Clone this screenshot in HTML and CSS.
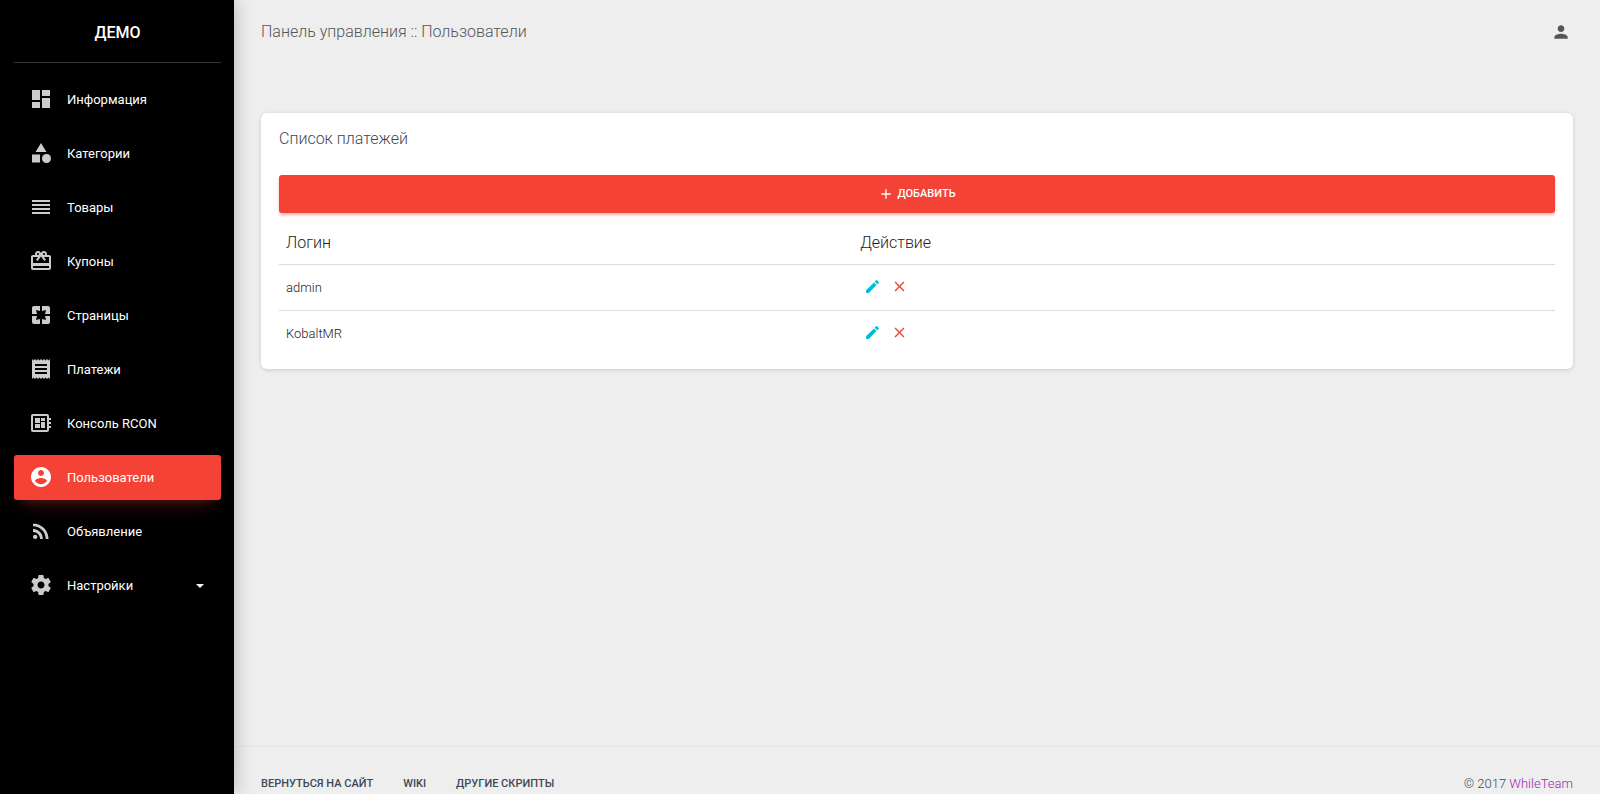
FILE: index.html
```html
<!DOCTYPE html>
<html lang="ru">
<head>
<meta charset="utf-8">
<meta name="viewport" content="width=device-width, initial-scale=1">
<title>Панель управления :: Пользователи</title>
<link rel="stylesheet" href="styles.css">
</head>
<body>
<div class="wrapper">
  <aside class="sidebar">
    <a class="brand" href="#">ДЕМО</a>
    <nav class="menu" aria-label="Основное меню">
      <a class="menu-item" href="#"><svg class="icon" viewBox="0 0 24 24"><path d="M3 13h8V3H3v10zm0 8h8v-6H3v6zm10 0h8V11h-8v10zm0-18v6h8V3h-8z"/></svg><span>Информация</span></a>
      <a class="menu-item" href="#"><svg class="icon" viewBox="0 0 24 24"><path d="M12 2l-5.500 9h11z"/><circle cx="17.500" cy="17.500" r="4.500"/><path d="M3 13.500h8v8H3z"/></svg><span>Категории</span></a>
      <a class="menu-item" href="#"><svg class="icon" viewBox="0 0 24 24"><path d="M3 15h18v-2H3v2zm0 4h18v-2H3v2zm0-8h18V9H3v2zm0-6v2h18V5H3z"/></svg><span>Товары</span></a>
      <a class="menu-item" href="#"><svg class="icon" viewBox="0 0 24 24"><path d="M20 6h-2.180c.11-.31.18-.65.18-1 0-1.660-1.340-3-3-3-1.050 0-1.960.54-2.500 1.350l-.5.67-.5-.68C10.960 2.540 10.050 2 9 2 7.340 2 6 3.340 6 5c0 .35.07.69.18 1H4c-1.110 0-1.990.89-1.990 2L2 19c0 1.110.89 2 2 2h16c1.110 0 2-.89 2-2V8c0-1.110-.89-2-2-2zm-5-2c.55 0 1 .45 1 1s-.45 1-1 1-1-.45-1-1 .45-1 1-1zM9 4c.55 0 1 .45 1 1s-.45 1-1 1-1-.45-1-1 .45-1 1-1zm11 15H4v-2h16v2zm0-5H4V8h5.080L7 10.830 8.620 12 11 8.760l1-1.360 1 1.360L15.380 12 17 10.830 14.920 8H20v6z"/></svg><span>Купоны</span></a>
      <a class="menu-item" href="#"><svg class="icon" viewBox="0 0 24 24"><path d="M3 5v6h5L7 7l4 1V3H5c-1.100 0-2 .9-2 2zm5 8H3v6c0 1.100.9 2 2 2h6v-5l-4 1 1-4zm9 4l-4-1v5h6c1.100 0 2-.9 2-2v-6h-5l1 4zm2-14h-6v5l4-1-1 4h5V5c0-1.100-.9-2-2-2z"/></svg><span>Страницы</span></a>
      <a class="menu-item" href="#"><svg class="icon" viewBox="0 0 24 24"><path d="M18 17H6v-2h12v2zm0-4H6v-2h12v2zm0-4H6V7h12v2zM3 22l1.500-1.500L6 22l1.500-1.500L9 22l1.500-1.500L12 22l1.500-1.500L15 22l1.500-1.500L18 22l1.500-1.500L21 22V2l-1.500 1.500L18 2l-1.500 1.500L15 2l-1.500 1.500L12 2l-1.500 1.500L9 2 7.500 3.500 6 2 4.500 3.500 3 2v20z"/></svg><span>Платежи</span></a>
      <a class="menu-item" href="#"><svg class="icon" viewBox="0 0 24 24"><path d="M22 9V7h-2V5c0-1.100-.9-2-2-2H4c-1.100 0-2 .9-2 2v14c0 1.100.9 2 2 2h14c1.100 0 2-.9 2-2v-2h2v-2h-2v-2h2v-2h-2V9h2zm-4 10H4V5h14v14z"/><path d="M6 13h5v4H6zm6-6h4v3h-4zM6 7h5v5H6zm6 4h4v6h-4z"/></svg><span>Консоль RCON</span></a>
      <a class="menu-item active" href="#" aria-current="page"><svg class="icon" viewBox="0 0 24 24"><path d="M12 2C6.480 2 2 6.480 2 12s4.480 10 10 10 10-4.480 10-10S17.520 2 12 2zm0 3c1.660 0 3 1.340 3 3s-1.340 3-3 3-3-1.340-3-3 1.340-3 3-3zm0 14.200c-2.500 0-4.710-1.280-6-3.220.03-1.990 4-3.080 6-3.080 1.990 0 5.970 1.090 6 3.080-1.290 1.940-3.500 3.220-6 3.220z"/></svg><span>Пользователи</span></a>
      <a class="menu-item" href="#"><svg class="icon" viewBox="0 0 24 24"><circle cx="6.180" cy="17.820" r="2.180"/><path d="M4 4.440v2.830c7.030 0 12.730 5.700 12.730 12.730h2.830c0-8.590-6.970-15.560-15.560-15.560zm0 5.660v2.830c3.900 0 7.070 3.170 7.070 7.070h2.830c0-5.470-4.430-9.900-9.900-9.900z"/></svg><span>Объявление</span></a>
      <button class="menu-item" type="button" aria-expanded="false"><svg class="icon" viewBox="0 0 24 24"><path d="M19.430 12.980c.04-.32.07-.64.07-.98s-.03-.66-.07-.98l2.110-1.650c.19-.15.24-.42.12-.64l-2-3.460c-.12-.22-.39-.3-.61-.22l-2.490 1c-.52-.4-1.080-.73-1.690-.98l-.38-2.650C14.460 2.180 14.250 2 14 2h-4c-.25 0-.46.18-.49.42l-.38 2.650c-.61.25-1.170.59-1.690.98l-2.490-1c-.23-.09-.49 0-.61.22l-2 3.460c-.13.22-.07.49.12.64l2.110 1.650c-.04.32-.07.65-.07.98s.03.66.07.98l-2.110 1.650c-.19.15-.24.42-.12.64l2 3.460c.12.22.39.3.61.22l2.490-1c.52.4 1.080.73 1.690.98l.38 2.650c.03.24.24.42.49.42h4c.25 0 .46-.18.49-.42l.38-2.650c.61-.25 1.170-.59 1.690-.98l2.490 1c.23.09.49 0 .61-.22l2-3.460c.12-.22.07-.49-.12-.64l-2.110-1.650zM12 15.500c-1.930 0-3.500-1.570-3.500-3.500s1.570-3.500 3.500-3.500 3.500 1.570 3.500 3.500-1.570 3.500-3.500 3.500z"/></svg><span>Настройки</span><i class="caret"></i></button>
    </nav>
  </aside>
  <div class="main">
    <header class="topbar">
      <a class="page-title" href="#">Панель управления :: Пользователи</a>
      <button class="profile" type="button" aria-label="Профиль"><svg viewBox="0 0 24 24"><path d="M12 12c2.210 0 4-1.790 4-4s-1.790-4-4-4-4 1.790-4 4 1.790 4 4 4zm0 2c-2.670 0-8 1.340-8 4v2h16v-2c0-2.660-5.330-4-8-4z"/></svg></button>
    </header>
    <main class="content">
      <section class="card">
        <h1 class="card-title">Список платежей</h1>
        <button class="add" type="button"><svg viewBox="0 0 24 24"><path d="M19 13h-6v6h-2v-6H5v-2h6V5h2v6h6v2z"/></svg>Добавить</button>
        <table class="users">
          <thead><tr><th scope="col" class="col-login">Логин</th><th scope="col">Действие</th></tr></thead>
          <tbody>
            <tr><td>admin</td><td><div class="actions">
              <button class="action edit" type="button" aria-label="Изменить admin"><svg viewBox="0 0 24 24"><path d="M3 17.250V21h3.750L17.810 9.940l-3.750-3.750L3 17.250zM20.710 7.040c.39-.39.39-1.020 0-1.410l-2.340-2.340c-.39-.39-1.020-.39-1.410 0l-1.830 1.830 3.750 3.750 1.830-1.830z"/></svg></button>
              <button class="action remove" type="button" aria-label="Удалить admin"><svg viewBox="0 0 24 24"><path d="M19 6.410L17.590 5 12 10.590 6.410 5 5 6.410 10.590 12 5 17.590 6.410 19 12 13.410 17.590 19 19 17.590 13.410 12z"/></svg></button></div></td></tr>
            <tr><td>KobaltMR</td><td><div class="actions">
              <button class="action edit" type="button" aria-label="Изменить KobaltMR"><svg viewBox="0 0 24 24"><path d="M3 17.250V21h3.750L17.810 9.940l-3.750-3.750L3 17.250zM20.710 7.040c.39-.39.39-1.020 0-1.410l-2.340-2.340c-.39-.39-1.020-.39-1.410 0l-1.830 1.830 3.750 3.750 1.830-1.830z"/></svg></button>
              <button class="action remove" type="button" aria-label="Удалить KobaltMR"><svg viewBox="0 0 24 24"><path d="M19 6.410L17.590 5 12 10.590 6.410 5 5 6.410 10.590 12 5 17.590 6.410 19 12 13.410 17.590 19 19 17.590 13.410 12z"/></svg></button></div></td></tr>
          </tbody>
        </table>
      </section>
    </main>
    <footer class="footer">
      <nav class="footer-links" aria-label="Ссылки">
        <a href="#">Вернуться на сайт</a>
        <a href="#">Wiki</a>
        <a href="#">Другие скрипты</a>
      </nav>
      <p class="copyright">© 2017 <a href="#">WhileTeam</a></p>
    </footer>
  </div>
</div>
</body>
</html>
```
FILE: styles.css
```css
* { box-sizing: border-box; }

body {
  margin: 0;
  background: #eee;
  color: #3c4858;
  font: 300 14px/20px Roboto, "Noto Sans", sans-serif;
}

a { color: inherit; text-decoration: none; }

button {
  border: 0;
  padding: 0;
  background: none;
  color: inherit;
  font: inherit;
  cursor: pointer;
}

svg { display: block; fill: currentColor; }

.wrapper { display: flex; min-height: 100vh; }

.sidebar {
  flex: 0 0 234px;
  padding: 0 13px 0 14px;
  background: #000;
  color: #fff;
  box-shadow: 0 0 18px rgba(0, 0, 0, .25);
}

.brand {
  display: block;
  padding: 19px 0 16px;
  border-bottom: 1px solid #333;
  font-size: 16px;
  font-weight: 500;
  line-height: 27px;
  text-align: center;
}

.menu {
  display: flex;
  flex-direction: column;
  gap: 9px;
  padding-top: 14px;
}

.menu-item {
  display: flex;
  align-items: center;
  height: 45px;
  padding: 0 17px 0 15px;
  border-radius: 3px;
  font-size: 13px;
  font-weight: 400;
}

.icon {
  width: 24px;
  height: 24px;
  margin: 0 14px 1px 0;
  opacity: .8;
}

.active {
  background: #f44336;
  box-shadow: 0 12px 20px -10px rgba(244, 67, 54, .28), 0 4px 20px 0 rgba(0, 0, 0, .12), 0 7px 8px -5px rgba(244, 67, 54, .2);
}

.active .icon { opacity: 1; }

.caret {
  margin-left: auto;
  border: 4px solid transparent;
  border-top-color: #fff;
  border-bottom: 0;
}

.main {
  display: flex;
  flex: 1;
  flex-direction: column;
  min-width: 0;
}

.topbar {
  display: flex;
  align-items: center;
  justify-content: space-between;
  padding: 21px 27px 0;
}

.page-title { color: #555; font-size: 16px; line-height: 22px; }

.profile { margin-right: 2px; color: #555; }
.profile svg { width: 20px; height: 20px; }

.content { flex: 1; padding: 70px 27px 30px; }

.card {
  padding: 15px 18px 13px;
  border-radius: 6px;
  background: #fff;
  box-shadow: 0 1px 4px rgba(0, 0, 0, .14);
}

.card-title {
  margin: 0;
  font-size: 16px;
  font-weight: 300;
  line-height: 22px;
}

.add {
  display: flex;
  align-items: center;
  justify-content: center;
  gap: 3px;
  width: 100%;
  height: 38px;
  margin-top: 25px;
  border-radius: 3px;
  background: #f44336;
  box-shadow: 0 2px 3px rgba(244, 67, 54, .4);
  color: #fff;
  font-size: 11px;
  font-weight: 500;
  text-transform: uppercase;
}

.add svg { width: 16px; height: 16px; }

.users {
  width: 100%;
  margin-top: 6px;
  border-collapse: collapse;
  color: #222;
  text-align: left;
}

.users th {
  height: 45px;
  padding: 3px 8px 0 7px;
  border-bottom: 1px solid #ddd;
  font-size: 16px;
  font-weight: 300;
}

.users td { height: 46px; padding: 2px 7px 0; font-size: 13px; }
.users tbody tr + tr td { border-top: 1px solid #ddd; }
.col-login { width: 45%; }

.actions { display: flex; gap: 10px; padding: 0 0 4px 4px; }
.action svg { width: 17px; height: 17px; }
.edit { color: #00bcd4; }
.remove { color: #f44336; }

.footer {
  display: flex;
  align-items: center;
  justify-content: space-between;
  padding: 27px 27px 0;
  border-top: 1px solid rgba(0, 0, 0, .03);
}

.footer-links { display: flex; gap: 30px; font-size: 11px; font-weight: 500; text-transform: uppercase; }

.copyright { margin: 0; font-size: 13px; }
.copyright a { color: #9c27b0; }
```
